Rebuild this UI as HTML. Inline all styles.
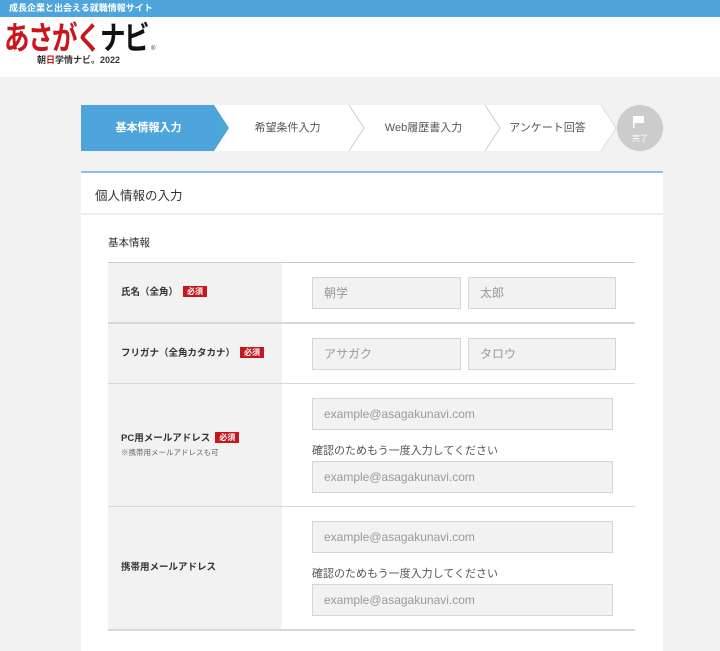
<!DOCTYPE html>
<html><head><meta charset="utf-8"><style>
*{margin:0;padding:0;box-sizing:border-box}
body{width:720px;height:645px;overflow:hidden;background:#f2f2f2;font-family:"Liberation Sans","Noto Sans CJK JP",sans-serif;color:#333;position:relative}
.abs{position:absolute}
.top{left:0;top:0;width:720px;height:17px;background:#4ea5dc;color:#fff;font-size:9px;font-weight:bold;line-height:17px;padding-left:9px}
.hdr{left:0;top:17px;width:720px;height:60px;background:#fff}
.step{top:105px;height:46px;font-size:11px;line-height:46px;text-align:center;color:#555}
.card{left:81px;top:171px;width:582px;height:480px;background:#fff;border-top:2px solid #8fc1e3}
.inp{position:absolute;background:#f2f2f2;border:1px solid #d5d5d5;height:32px;font-size:12px;color:#999;line-height:30px;padding-left:11px}
.lbl{position:absolute;left:0;width:174px;background:#f2f2f2;font-size:9.5px;font-weight:bold;padding-left:13px}
.req{display:inline-block;background:#c8161d;color:#fff;font-size:8px;padding:0 4px;line-height:11px;margin-left:5px;vertical-align:1px}
.line{position:absolute;left:0;width:527px;height:2px;background:#d8d8d8}
.note{position:absolute;font-size:11px;color:#555}
</style></head><body>
<div class="abs top">成長企業と出会える就職情報サイト</div>
<div class="abs hdr">
<div class="abs" style="left:4px;top:3px;font-size:32px;font-weight:bold;color:#c8161d;letter-spacing:-2px;line-height:36px;transform:scaleX(0.8);transform-origin:0 0;white-space:nowrap">あさがく<span style="color:#111">ナビ</span></div>
<div class="abs" style="left:151px;top:29px;font-size:6px;color:#333">®</div>
<div class="abs" style="left:37px;top:36px;font-size:9px;font-weight:bold;color:#333">朝<span style="color:#c8161d">日</span>学情ナビ。2022</div>
</div>
<svg class="abs" style="left:81px;top:105px" width="600" height="48">
<polygon points="0,0 534,0 534,46 0,46" fill="#fff"/>
<polygon points="0,0 133,0 148,23 133,46 0,46" fill="#4ea5dc"/>
<polyline points="268,0 283,23 268,46" fill="none" stroke="#ccc"/>
<polyline points="404,0 419,23 404,46" fill="none" stroke="#ccc"/>
<polygon points="520,0 534,0 534,46 520,46 535,23" fill="#f2f2f2"/>
<polyline points="520,0 535,23 520,46" fill="none" stroke="#ddd"/>
<circle cx="559" cy="23" r="23" fill="#ccc"/>
<rect x="552" y="11" width="1.5" height="12" fill="#fff"/><path d="M553,11 h10 v7 h-10z" fill="#fff"/>
<text x="559" y="36" font-size="8" fill="#fff" text-anchor="middle" font-family="Noto Sans CJK JP">完了</text>
</svg>
<div class="abs step" style="left:81px;width:135px;color:#fff;font-weight:bold">基本情報入力</div>
<div class="abs step" style="left:220px;width:135px">希望条件入力</div>
<div class="abs step" style="left:356px;width:135px">Web履歴書入力</div>
<div class="abs step" style="left:480px;width:135px">アンケート回答</div>
<div class="abs card">
<div class="abs" style="left:14px;top:12px;font-size:12.5px">個人情報の入力</div>
<div class="abs" style="left:0;top:40px;width:582px;height:2px;background:#eee"></div>
<div class="abs" style="left:27px;top:62px;font-size:10.5px">基本情報</div>
<div class="abs" style="left:27px;top:89px;width:527px;height:380px">
<div class="abs" style="left:0;top:0;width:527px;height:1px;background:#ccc"></div>
<div class="lbl" style="top:1px;height:60px;line-height:60px">氏名（全角）<span class="req">必須</span></div>
<div class="inp" style="left:204px;top:15px;width:149px">朝学</div>
<div class="inp" style="left:360px;top:15px;width:148px">太郎</div>
<div class="line" style="top:60px"></div>
<div class="lbl" style="top:62px;height:60px;line-height:60px">フリガナ（全角カタカナ）<span class="req">必須</span></div>
<div class="inp" style="left:204px;top:76px;width:149px">アサガク</div>
<div class="inp" style="left:360px;top:76px;width:148px">タロウ</div>
<div class="line" style="top:121px;height:1px"></div>
<div class="lbl" style="top:122px;height:122px;padding-top:48px;line-height:14px">PC用メールアドレス<span class="req">必須</span><br><span style="font-weight:normal;font-size:7.5px;color:#666">※携帯用メールアドレスも可</span></div>
<div class="inp" style="left:204px;top:136px;width:301px">example@asagakunavi.com</div>
<div class="note" style="left:204px;top:180px">確認のためもう一度入力してください</div>
<div class="inp" style="left:204px;top:199px;width:301px">example@asagakunavi.com</div>
<div class="line" style="top:244px;height:1px"></div>
<div class="lbl" style="top:245px;height:122px;line-height:122px">携帯用メールアドレス</div>
<div class="inp" style="left:204px;top:259px;width:301px">example@asagakunavi.com</div>
<div class="note" style="left:204px;top:303px">確認のためもう一度入力してください</div>
<div class="inp" style="left:204px;top:322px;width:301px">example@asagakunavi.com</div>
<div class="line" style="top:367px"></div>
</div>
</div>
</body></html>
